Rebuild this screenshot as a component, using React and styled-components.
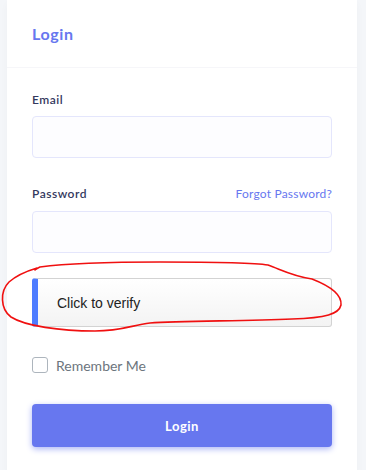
import React from "react";
import styled, { createGlobalStyle } from "styled-components";

const Global = createGlobalStyle`
  html, body { margin: 0; padding: 0; }
  body {
    background: #f4f6f9;
    font-family: "Lato", "Open Sans", sans-serif;
    width: 366px;
    height: 470px;
    overflow: hidden;
  }
  * { box-sizing: border-box; }
`;

const Page = styled.div`
  position: relative;
  width: 366px;
  height: 470px;
  padding-left: 7px;
`;

const Card = styled.div`
  width: 350px;
  height: 470px;
  background: #fff;
  box-shadow: 0 4px 8px rgba(0, 0, 0, 0.03);
`;

const Header = styled.div`
  height: 68px;
  display: flex;
  align-items: center;
  padding: 0 25px;
  border-bottom: 1px solid #f6f6f9;
`;

const Title = styled.h4`
  margin: 0;
  font-size: 16px;
  font-weight: 700;
  color: #6777ef;
  letter-spacing: 0.6px;
`;

const Body = styled.div`
  padding: 22px 25px 0;
`;

const LabelRow = styled.div`
  display: flex;
  justify-content: space-between;
  align-items: center;
  height: 18px;
  margin-top: ${(p) => p.$top || 0}px;
  margin-bottom: ${(p) => p.$bottom || 8}px;
`;

const Label = styled.label`
  font-size: 12px;
  font-weight: 600;
  color: #34395e;
  letter-spacing: 0.5px;
`;

const Link = styled.a`
  font-size: 12px;
  color: #6777ef;
  text-decoration: none;
  letter-spacing: 0.2px;
`;

const Input = styled.input`
  display: block;
  width: 300px;
  height: 42px;
  background: #fdfdff;
  border: 1px solid #e4e6fc;
  border-radius: 4px;
  outline: none;
  padding: 0 15px;
`;

const Captcha = styled.div`
  margin-top: 25px;
  width: 300px;
  height: 49px;
  display: flex;
  align-items: center;
  border: 1px solid #d3d3d3;
  border-left: 6px solid #4e7cff;
  border-radius: 3px;
  background: linear-gradient(to bottom, #ffffff, #f3f3f3);
  padding-left: 19px;
  font-family: "Liberation Sans", Arial, sans-serif;
  font-size: 14px;
  color: #222;
`;

const CheckRow = styled.label`
  display: flex;
  align-items: center;
  gap: 8px;
  margin-top: 30px;
  height: 16px;
`;

const Box = styled.span`
  width: 16px;
  height: 16px;
  border: 1px solid #adb5bd;
  border-radius: 3px;
  background: #fff;
`;

const CheckText = styled.span`
  font-size: 14px;
  color: #6c757d;
`;

const Button = styled.button`
  margin-top: 31px;
  width: 300px;
  height: 43px;
  border: none;
  border-radius: 4px;
  background: #6777ef;
  color: #fff;
  font-family: inherit;
  font-size: 13px;
  font-weight: 700;
  letter-spacing: 0.5px;
  box-shadow: 0 2px 6px #acb5f6;
`;

const Annotation = styled.svg`
  position: absolute;
  left: 0;
  top: 0;
  pointer-events: none;
`;

export default function App() {
  return (
    <Page>
      <Global />
      <Card>
        <Header>
          <Title>Login</Title>
        </Header>
        <Body>
          <LabelRow $bottom={8}>
            <Label>Email</Label>
          </LabelRow>
          <Input type="email" />
          <LabelRow $top={26} $bottom={9}>
            <Label>Password</Label>
            <Link href="#">Forgot Password?</Link>
          </LabelRow>
          <Input type="password" />
          <Captcha>Click to verify</Captcha>
          <CheckRow>
            <Box />
            <CheckText>Remember Me</CheckText>
          </CheckRow>
          <Button>Login</Button>
        </Body>
      </Card>
      <Annotation width="366" height="470" viewBox="0 0 366 470">
        <path
          d="M35,270 C37,268 38,268 40,267 C70,263 120,262 160,262 C200,262 250,262 268,265 C282,270 292,276 312,279 C330,286 342,295 341,305 C339,314 326,318 292,319 C240,321 180,321 150,323 C132,325 122,331 95,331 C60,331 25,326 11,317 C0,309 0,291 9,282 C17,275 27,271 37,268"
          fill="none"
          stroke="#f01010"
          strokeWidth="1.6"
          strokeLinecap="round"
        />
      </Annotation>
    </Page>
  );
}
